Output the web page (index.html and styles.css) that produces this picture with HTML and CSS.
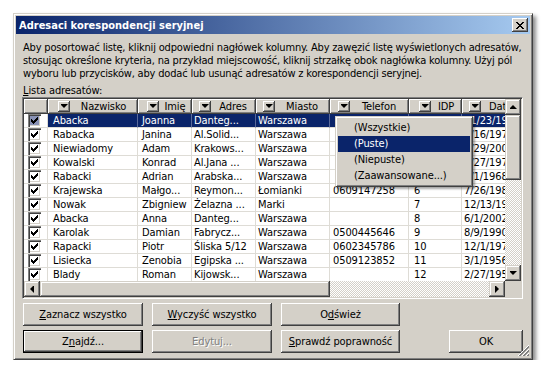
FILE: index.html
```html
<!DOCTYPE html>
<html lang="pl">
  <head>
    <meta charset="UTF-8" />
    <title>Adresaci korespondencji seryjnej</title>
    <link rel="stylesheet" href="styles.css">
  </head>
  <body>
    <div class="window">
      <div class="titlebar">
        <span class="title">Adresaci korespondencji seryjnej</span>
        <span class="close-btn">
          <svg width="8" height="7" viewBox="0 0 8 7" shape-rendering="crispEdges">
            <path fill="#000" d="M0 0h2v1H0zM6 0h2v1H6zM1 1h2v1H1zM5 1h2v1H5zM2 2h4v1H2zM3 3h2v1H3zM2 4h4v1H2zM1 5h2v1H1zM5 5h2v1H5zM0 6h2v1H0zM6 6h2v1H6z"/>
          </svg>
        </span>
      </div>

      <div class="content">
        <p class="intro">Aby posortować listę, kliknij odpowiedni nagłówek kolumny. Aby zawęzić listę wyświetlonych adresatów,<br>stosując określone kryteria, na przykład miejscowość, kliknij strzałkę obok nagłówka kolumny. Użyj pól<br>wyboru lub przycisków, aby dodać lub usunąć adresatów z korespondencji seryjnej.</p>
        <div class="list-label"><u>L</u>ista adresatów:</div>

        <div class="listbox">
          <div class="list-main">
            <div class="list-view">
              <div class="row head">
                <div class="hcell"></div>
                <div class="hcell"><span class="drop"></span><span class="hlabel">Nazwisko</span></div>
                <div class="hcell"><span class="drop"></span><span class="hlabel">Imię</span></div>
                <div class="hcell"><span class="drop"></span><span class="hlabel">Adres</span></div>
                <div class="hcell"><span class="drop"></span><span class="hlabel">Miasto</span></div>
                <div class="hcell"><span class="drop"></span><span class="hlabel">Telefon</span></div>
                <div class="hcell"><span class="drop"></span><span class="hlabel">IDP</span></div>
                <div class="hcell"><span class="drop"></span><span class="hlabel left">Data urodzenia</span></div>
              </div>

              <div class="row selected">
                <div class="cell"><span class="chk"></span></div>
                <div class="cell">Abacka</div><div class="cell">Joanna</div><div class="cell">Danteg...</div>
                <div class="cell">Warszawa</div><div class="cell"></div><div class="cell">1</div><div class="cell">11/23/1979</div>
              </div>
              <div class="row">
                <div class="cell"><span class="chk"></span></div>
                <div class="cell">Rabacka</div><div class="cell">Janina</div><div class="cell">Al.Solid...</div>
                <div class="cell">Warszawa</div><div class="cell"></div><div class="cell">2</div><div class="cell">5/16/1972</div>
              </div>
              <div class="row">
                <div class="cell"><span class="chk"></span></div>
                <div class="cell">Niewiadomy</div><div class="cell">Adam</div><div class="cell">Krakows...</div>
                <div class="cell">Warszawa</div><div class="cell"></div><div class="cell">3</div><div class="cell">9/29/2001</div>
              </div>
              <div class="row">
                <div class="cell"><span class="chk"></span></div>
                <div class="cell">Kowalski</div><div class="cell">Konrad</div><div class="cell">Al.Jana ...</div>
                <div class="cell">Warszawa</div><div class="cell"></div><div class="cell">4</div><div class="cell">4/27/1970</div>
              </div>
              <div class="row">
                <div class="cell"><span class="chk"></span></div>
                <div class="cell">Rabacki</div><div class="cell">Adrian</div><div class="cell">Arabska...</div>
                <div class="cell">Warszawa</div><div class="cell"></div><div class="cell">5</div><div class="cell">8/1/1968</div>
              </div>
              <div class="row">
                <div class="cell"><span class="chk"></span></div>
                <div class="cell">Krajewska</div><div class="cell">Małgo...</div><div class="cell">Reymon...</div>
                <div class="cell">Łomianki</div><div class="cell">0609147258</div><div class="cell">6</div><div class="cell">7/26/1985</div>
              </div>
              <div class="row">
                <div class="cell"><span class="chk"></span></div>
                <div class="cell">Nowak</div><div class="cell">Zbigniew</div><div class="cell">Żelazna ...</div>
                <div class="cell">Marki</div><div class="cell"></div><div class="cell">7</div><div class="cell">12/13/1971</div>
              </div>
              <div class="row">
                <div class="cell"><span class="chk"></span></div>
                <div class="cell">Abacka</div><div class="cell">Anna</div><div class="cell">Danteg...</div>
                <div class="cell">Warszawa</div><div class="cell"></div><div class="cell">8</div><div class="cell">6/1/2002</div>
              </div>
              <div class="row">
                <div class="cell"><span class="chk"></span></div>
                <div class="cell">Karolak</div><div class="cell">Damian</div><div class="cell">Fabrycz...</div>
                <div class="cell">Warszawa</div><div class="cell">0500445646</div><div class="cell">9</div><div class="cell">8/9/1990</div>
              </div>
              <div class="row">
                <div class="cell"><span class="chk"></span></div>
                <div class="cell">Rapacki</div><div class="cell">Piotr</div><div class="cell">Śliska 5/12</div>
                <div class="cell">Warszawa</div><div class="cell">0602345786</div><div class="cell">10</div><div class="cell">12/1/1973</div>
              </div>
              <div class="row">
                <div class="cell"><span class="chk"></span></div>
                <div class="cell">Lisiecka</div><div class="cell">Zenobia</div><div class="cell">Egipska ...</div>
                <div class="cell">Warszawa</div><div class="cell">0509123852</div><div class="cell">11</div><div class="cell">3/1/1956</div>
              </div>
              <div class="row">
                <div class="cell"><span class="chk"></span></div>
                <div class="cell">Blady</div><div class="cell">Roman</div><div class="cell">Kijowsk...</div>
                <div class="cell">Warszawa</div><div class="cell"></div><div class="cell">12</div><div class="cell">2/27/1954</div>
              </div>
            </div>

            <div class="vscroll">
              <span class="sb-btn up"></span>
              <span class="thumb v"></span>
              <span class="track"></span>
              <span class="sb-btn down"></span>
            </div>
          </div>

          <div class="hscroll">
            <span class="sb-btn left"></span>
            <span class="thumb h"></span>
            <span class="track"></span>
            <span class="sb-btn right"></span>
            <span class="corner"></span>
          </div>

          <!-- filter dropdown opened from the Telefon header -->
          <div class="menu">
            <div class="menu-item">(Wszystkie)</div>
            <div class="menu-item active">(Puste)</div>
            <div class="menu-item">(Niepuste)</div>
            <div class="menu-item">(Zaawansowane...)</div>
          </div>
        </div>

        <div class="btn-row">
          <button class="btn"><u>Z</u>aznacz wszystko</button>
          <button class="btn"><u>W</u>yczyść wszystko</button>
          <button class="btn narrow">O<u>d</u>śwież</button>
        </div>
        <div class="btn-row">
          <button class="btn default">Z<u>n</u>ajdź...</button>
          <button class="btn disabled">Edytuj...</button>
          <button class="btn narrow"><u>S</u>prawdź poprawność</button>
          <button class="btn ok">OK</button>
        </div>
      </div>

      <svg class="grip" width="12" height="12" viewBox="0 0 12 12" shape-rendering="crispEdges">
        <path stroke="#fff" d="M11 0L0 11M11 4L4 11M11 8L8 11"/>
        <path stroke="#808080" d="M11 1L1 11M11 2L2 11M11 5L5 11M11 6L6 11M11 9L9 11M11 10L10 11"/>
      </svg>
    </div>
  </body>
</html>
```

FILE: styles.css
```css
* {
  box-sizing: border-box;
}
body {
  margin: 0;
  background: #fff;
  font-family: "DejaVu Sans Condensed", "Liberation Sans", sans-serif;
  font-size: 11px;
  letter-spacing: -0.1px;
  color: #000;
}
.window {
  position: relative;
  width: 520px;
  height: 347px;
  margin: 13px 0 0 13px;
  padding: 2px;
  background: #d4d0c8;
  border: 1px solid;
  border-color: #d4d0c8 #404040 #404040 #d4d0c8;
  box-shadow: inset 1px 1px #fff, inset -1px -1px #808080, 3px 3px 4px rgba(0, 0, 0, 0.45);
  display: flex;
  flex-direction: column;
}
.titlebar {
  height: 18px;
  display: flex;
  align-items: center;
  justify-content: space-between;
  padding: 0 2px 0 3px;
  background: linear-gradient(to right, #0a246a, #a6caf0);
  color: #fff;
  font-weight: bold;
  letter-spacing: 0;
}
.close-btn {
  width: 16px;
  height: 14px;
  display: flex;
  align-items: center;
  justify-content: center;
  background: #d4d0c8;
  box-shadow: inset -1px -1px #404040, inset 1px 1px #fff, inset -2px -2px #808080;
}
.content {
  flex: 1;
  padding: 0 7px;
  display: flex;
  flex-direction: column;
}
.intro {
  margin: 7px 0 0;
  line-height: 13px;
  white-space: nowrap;
  letter-spacing: -0.18px;
}
.list-label {
  margin-top: 4px;
  line-height: 13px;
}

/* list view */
.listbox {
  position: relative;
  width: 501px;
  height: 202px;
  margin-left: -1px;
  padding: 1px;
  border: 1px solid;
  border-color: #808080 #fff #fff #808080;
  box-shadow: inset 1px 1px #404040, inset -1px -1px #d4d0c8;
}
.list-main {
  display: flex;
  height: 182px;
}
.list-view {
  flex: 1;
  overflow: hidden;
  background: #fff;
}
.row {
  display: grid;
  grid-template-columns: 24px 90px 54px 64px 74px 79px 53px 80px;
  height: 14px;
}
.row.head {
  height: 15px;
}
.hcell {
  display: flex;
  align-items: center;
  background: #d4d0c8;
  border-right: 1px solid #404040;
  border-bottom: 1px solid #404040;
  box-shadow: inset 1px 1px #fff, inset -1px -1px #808080;
  white-space: nowrap;
  overflow: hidden;
}
.drop {
  flex: none;
  width: 12px;
  height: 11px;
  margin-left: 5px;
  display: flex;
  align-items: center;
  justify-content: center;
  box-shadow: inset -1px -1px #404040, inset 1px 1px #fff, inset -2px -2px #808080;
}
.drop::after {
  content: "";
  width: 7px;
  height: 4px;
  background: #000;
  clip-path: polygon(0 0, 7px 0, 7px 1px, 6px 1px, 6px 2px, 5px 2px, 5px 3px, 4px 3px, 4px 4px, 3px 4px, 3px 3px, 2px 3px, 2px 2px, 1px 2px, 1px 1px, 0 1px);
}
.hlabel {
  flex: 1;
  text-align: center;
}
.hlabel.left {
  flex: none;
  margin-left: 8px;
}
.cell {
  border-right: 1px solid #dedcd6;
  border-bottom: 1px solid #dedcd6;
  line-height: 13px;
  white-space: nowrap;
  overflow: hidden;
}
.row > :nth-child(1) {
  display: flex;
  align-items: center;
  padding-left: 4px;
}
.row > :nth-child(2) { padding-left: 5px; }
.row > :nth-child(3) { padding-left: 4px; }
.row > :nth-child(4) { padding-left: 2px; }
.row > :nth-child(5) { padding-left: 2px; }
.row > :nth-child(6) { padding-left: 3px; }
.row > :nth-child(7) { padding-left: 5px; }
.row > :nth-child(8) { padding-left: 2px; }
.selected .cell:not(:first-child) {
  background: #0a246a;
  color: #fff;
  border-right-color: #5a6a9a;
}
.chk {
  width: 13px;
  height: 13px;
  display: flex;
  align-items: center;
  justify-content: center;
  background: #fff;
  box-shadow: inset 1px 1px #808080, inset 2px 2px #404040, inset -1px -1px #fff, inset -2px -2px #d4d0c8;
}
.selected .chk {
  background: #8790b4;
}
.chk::after {
  content: "";
  width: 7px;
  height: 7px;
  background: #000;
  clip-path: polygon(0 2px, 1px 2px, 1px 3px, 2px 3px, 2px 4px, 3px 4px, 3px 3px, 4px 3px, 4px 2px, 5px 2px, 5px 1px, 6px 1px, 6px 0, 7px 0, 7px 3px, 6px 3px, 6px 4px, 5px 4px, 5px 5px, 4px 5px, 4px 6px, 3px 6px, 3px 7px, 2px 7px, 2px 6px, 1px 6px, 1px 5px, 0 5px);
}

/* scroll bars */
.vscroll {
  width: 16px;
  display: flex;
  flex-direction: column;
}
.hscroll {
  display: flex;
  height: 16px;
}
.sb-btn {
  flex: none;
  width: 16px;
  height: 16px;
  display: flex;
  align-items: center;
  justify-content: center;
  background: #d4d0c8;
  box-shadow: inset -1px -1px #404040, inset 1px 1px #d4d0c8, inset -2px -2px #808080, inset 2px 2px #fff;
}
.sb-btn::after {
  content: "";
  background: #000;
}
.up::after,
.down::after {
  width: 7px;
  height: 4px;
}
.left::after,
.right::after {
  width: 4px;
  height: 7px;
}
.up::after {
  clip-path: polygon(3px 0, 4px 0, 4px 1px, 5px 1px, 5px 2px, 6px 2px, 6px 3px, 7px 3px, 7px 4px, 0 4px, 0 3px, 1px 3px, 1px 2px, 2px 2px, 2px 1px, 3px 1px);
}
.down::after {
  clip-path: polygon(0 0, 7px 0, 7px 1px, 6px 1px, 6px 2px, 5px 2px, 5px 3px, 4px 3px, 4px 4px, 3px 4px, 3px 3px, 2px 3px, 2px 2px, 1px 2px, 1px 1px, 0 1px);
}
.left::after {
  clip-path: polygon(0 3px, 1px 3px, 1px 2px, 2px 2px, 2px 1px, 3px 1px, 3px 0, 4px 0, 4px 7px, 3px 7px, 3px 6px, 2px 6px, 2px 5px, 1px 5px, 1px 4px, 0 4px);
}
.right::after {
  clip-path: polygon(0 0, 1px 0, 1px 1px, 2px 1px, 2px 2px, 3px 2px, 3px 3px, 4px 3px, 4px 4px, 3px 4px, 3px 5px, 2px 5px, 2px 6px, 1px 6px, 1px 7px, 0 7px);
}
.thumb {
  flex: none;
  background: #d4d0c8;
  box-shadow: inset -1px -1px #404040, inset 1px 1px #d4d0c8, inset -2px -2px #808080, inset 2px 2px #fff;
}
.thumb.v {
  height: 65px;
}
.thumb.h {
  width: 290px;
}
.track {
  flex: 1;
  background: repeating-conic-gradient(#fff 0 25%, #d4d0c8 0 50%) 0 0 / 2px 2px;
}
.corner {
  width: 16px;
  background: #d4d0c8;
}

/* filter dropdown */
.menu {
  position: absolute;
  left: 312px;
  top: 18px;
  width: 138px;
  padding: 3px 2px 2px;
  background: #d4d0c8;
  border: 1px solid;
  border-color: #d4d0c8 #404040 #404040 #d4d0c8;
  box-shadow: inset 1px 1px #fff, inset -1px -1px #808080, 2px 2px 2px rgba(0, 0, 0, 0.35);
}
.menu-item {
  height: 16px;
  line-height: 16px;
  padding-left: 16px;
  white-space: nowrap;
}
.menu-item.active {
  background: #0a246a;
  color: #fff;
}

/* dialog buttons */
.btn-row {
  display: flex;
  gap: 9px;
  margin-top: 4px;
}
.btn {
  width: 120px;
  height: 23px;
  padding: 0;
  border: 0;
  font: inherit;
  letter-spacing: inherit;
  color: #000;
  background: #d4d0c8;
  box-shadow: inset -1px -1px #404040, inset 1px 1px #fff, inset -2px -2px #808080;
}
.btn.narrow {
  width: 119px;
}
.btn.default {
  box-shadow: inset 0 0 0 1px #000, inset -2px -2px #404040, inset 2px 2px #fff, inset -3px -3px #808080;
}
.btn.disabled {
  color: #808080;
  text-shadow: 1px 1px #fff;
}
.btn.ok {
  width: 74px;
  margin-left: auto;
}
.grip {
  position: absolute;
  right: 2px;
  bottom: 2px;
}
```
